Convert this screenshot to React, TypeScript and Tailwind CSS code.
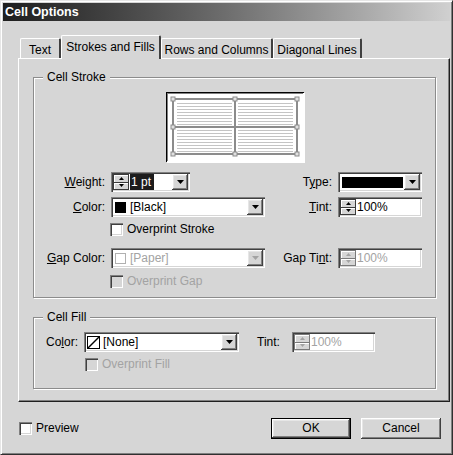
import type { ReactNode } from 'react'

const sunken =
  'shadow-[inset_1px_1px_0_#808080,inset_2px_2px_0_#404040,inset_-1px_-1px_0_#ffffff,inset_-2px_-2px_0_#d6d6d6]'
const raised =
  'shadow-[inset_-1px_-1px_0_#404040,inset_1px_1px_0_#ffffff,inset_-2px_-2px_0_#808080,inset_2px_2px_0_#e6e6e6]'

function Tri({ dir = 'down', small = false, dim = false }: { dir?: 'up' | 'down'; small?: boolean; dim?: boolean }) {
  const w = small ? 5 : 7
  const h = small ? 3 : 4
  const d = dir === 'up' ? `M0 ${h} L${w / 2} 0 L${w} ${h}Z` : `M0 0 L${w / 2} ${h} L${w} 0Z`
  return (
    <svg width={w} height={h} viewBox={`0 0 ${w} ${h}`}>
      <path d={d} fill={dim ? '#a3a3a3' : '#000'} />
    </svg>
  )
}

function DropBtn({ dim }: { dim?: boolean }) {
  return (
    <div className={`w-[16px] h-[16px] bg-[#d6d6d6] flex items-center justify-center ${raised}`}>
      <Tri dim={dim} />
    </div>
  )
}

function Spinner({ dim }: { dim?: boolean }) {
  return (
    <div className={`w-[16px] h-[16px] flex flex-col bg-[#d6d6d6] border ${dim ? 'border-[#7a7a7a]' : 'border-[#3a3a3a]'}`}>
      <div className={`flex-1 flex items-center justify-center border-b ${dim ? 'border-[#7a7a7a]' : 'border-[#3a3a3a]'} shadow-[inset_1px_1px_0_#fff]`}>
        <Tri dir="up" small dim={dim} />
      </div>
      <div className="flex-1 flex items-center justify-center shadow-[inset_1px_1px_0_#fff]">
        <Tri small dim={dim} />
      </div>
    </div>
  )
}

function Field({ w, children, drop, spin, dim }: { w: string; children: ReactNode; drop?: boolean; spin?: boolean; dim?: boolean }) {
  return (
    <div className={`${w} h-[20px] bg-white p-[2px] flex items-center ${sunken}`}>
      {spin && <Spinner dim={dim} />}
      <div className={`flex-1 min-w-0 flex items-center h-full ${dim ? 'text-[#a3a3a3]' : ''}`}>{children}</div>
      {drop && <DropBtn dim={dim} />}
    </div>
  )
}

function Check({ dim, label }: { dim?: boolean; label: string }) {
  return (
    <div className="flex items-center h-[13px]">
      <div className={`w-[13px] h-[13px] ${dim ? 'bg-[#d6d6d6]' : 'bg-white'} ${sunken}`} />
      <span className={`ml-[4px] leading-[13px] ${dim ? 'text-[#a3a3a3]' : ''}`}>{label}</span>
    </div>
  )
}

function Group({ title, className, children }: { title: string; className: string; children: ReactNode }) {
  return (
    <div className={`relative border border-[#8c8c8c] shadow-[inset_1px_1px_0_#ffffff,1px_1px_0_#ffffff] ${className}`}>
      <span className="absolute -top-[8px] left-[9px] px-[4px] bg-[#d6d6d6] leading-[14px]">{title}</span>
      {children}
    </div>
  )
}

function Preview() {
  const hatch: number[] = []
  for (let y = 11; y <= 60; y += 3) if (y < 33 || y > 37) hatch.push(y)
  const handles = [
    [7, 7], [69, 7], [131, 7],
    [7, 35], [131, 35],
    [7, 62], [69, 62], [131, 62],
  ]
  return (
    <svg width="138" height="70" viewBox="0 0 138 70">
      <rect x="0" y="0" width="138" height="70" fill="#fff" />
      <path d="M0 0.5H138M0.5 0V70" stroke="#000" />
      <path d="M1 1.5H137M1.5 1V69" stroke="#808080" />
      {hatch.map((y) => (
        <path key={y} d={`M11 ${y + 0.5}H66M72 ${y + 0.5}H127`} stroke="#c4c4c4" />
      ))}
      <rect x="7" y="7" width="124" height="55" fill="none" stroke="#8c8c8c" strokeWidth="2" />
      <path d="M69 7V62M7 35H131" stroke="#8c8c8c" strokeWidth="2" />
      {handles.map(([x, y], i) => (
        <rect key={i} x={x - 2} y={y - 2} width="4" height="4" fill="#e0e0e0" stroke="#8c8c8c" />
      ))}
    </svg>
  )
}

const tabs = [
  { label: 'Text', w: 'w-[41px]' },
  { label: 'Strokes and Fills', w: 'w-[100px]', active: true },
  { label: 'Rows and Columns', w: 'w-[112px]' },
  { label: 'Diagonal Lines', w: 'w-[89px]' },
]

export default function App() {
  return (
    <div className="w-[453px] h-[455px] bg-[#d6d6d6] text-[12px] text-black font-['Liberation_Sans',Arial,sans-serif] border border-t-[#e6e6e6] border-l-[#e6e6e6] border-r-[#303030] border-b-[#303030] shadow-[inset_1px_1px_0_#ffffff,inset_-1px_-1px_0_#808080] p-[2px] flex flex-col overflow-hidden">
      {/* title bar */}
      <div className="h-[18px] shrink-0 bg-linear-to-r from-[#1e1e1e] via-[#6e6e6e] to-[#d0d0d0] text-white font-bold text-[12.5px] leading-[18px] pl-[2px]">
        Cell Options
      </div>

      <div className="ml-[15px] mt-[14px] flex flex-col">
        {/* tabs */}
        <div className="flex items-end h-[23px] pl-[2px] relative z-10">
          {tabs.map((t) =>
            t.active ? (
              <div
                key={t.label}
                className={`${t.w} h-[24px] -mb-[1px] bg-[#d6d6d6] border-t border-l border-white border-r-2 border-r-[#404040] rounded-t-[2px] text-center leading-[22px]`}
              >
                {t.label}
              </div>
            ) : (
              <div
                key={t.label}
                className={`${t.w} h-[20px] border-t border-l border-white border-r-2 border-r-[#404040] rounded-t-[2px] text-center leading-[23px]`}
              >
                {t.label}
              </div>
            ),
          )}
        </div>

        {/* panel */}
        <div className="h-[344px] border-t border-l border-white border-r border-b border-r-[#202020] border-b-[#202020] shadow-[inset_-1px_-1px_0_#808080] pl-[14px] pt-[18px] flex flex-col">
          <Group title="Cell Stroke" className="w-[403px] h-[221px] flex flex-col">
            <div className="mt-[14px] flex justify-center">
              <div className="shadow-[1px_1px_0_#fff]">
                <Preview />
              </div>
            </div>

            {/* weight / type */}
            <div className="mt-[10px] flex items-center h-[20px]">
              <span className="w-[71px] text-right"><span className="underline">W</span>eight:</span>
              <div className="ml-[6px]">
                <Field w="w-[79px]" spin drop>
                  <span className="ml-[1px] h-[16px] w-[24px] bg-[#1c1c1c] text-white leading-[16px] pl-[1px]">1 pt</span>
                </Field>
              </div>
              <div className="flex-1" />
              <span className="text-right">T<span className="underline">y</span>pe:</span>
              <div className="ml-[6px] mr-[13px]">
                <Field w="w-[84px]" drop>
                  <div className="ml-[2px] mr-[1px] h-[11px] flex-1 bg-black" />
                </Field>
              </div>
            </div>

            {/* color / tint */}
            <div className="mt-[5px] flex items-center h-[20px]">
              <span className="w-[71px] text-right"><span className="underline">C</span>olor:</span>
              <div className="ml-[6px]">
                <Field w="w-[154px]" drop>
                  <div className="ml-[2px] w-[11px] h-[11px] bg-black" />
                  <span className="ml-[4px]">[Black]</span>
                </Field>
              </div>
              <div className="flex-1" />
              <span className="text-right"><span className="underline">T</span>int:</span>
              <div className="ml-[6px] mr-[13px]">
                <Field w="w-[84px]" spin>
                  <span className="ml-[1px]">100%</span>
                </Field>
              </div>
            </div>

            <div className="mt-[6px] pl-[76px]">
              <Check label="Overprint Stroke" />
            </div>

            {/* gap color / gap tint */}
            <div className="mt-[12px] flex items-center h-[20px]">
              <span className="w-[71px] text-right"><span className="underline">G</span>ap Color:</span>
              <div className="ml-[6px]">
                <Field w="w-[154px]" drop dim>
                  <div className="ml-[2px] w-[11px] h-[11px] border border-[#b0b0b0] bg-white" />
                  <span className="ml-[4px]">[Paper]</span>
                </Field>
              </div>
              <div className="flex-1" />
              <span className="text-right">Gap Ti<span className="underline">n</span>t:</span>
              <div className="ml-[6px] mr-[13px]">
                <Field w="w-[84px]" spin dim>
                  <span className="ml-[1px]">100%</span>
                </Field>
              </div>
            </div>

            <div className="mt-[7px] pl-[76px]">
              <Check dim label="Overprint Gap" />
            </div>
          </Group>

          <Group title="Cell Fill" className="mt-[19px] w-[403px] h-[72px] flex flex-col">
            <div className="mt-[14px] pl-[12px] flex items-center h-[20px]">
              <span className="w-[38px]">Co<span className="underline">l</span>or:</span>
              <Field w="w-[155px]" drop>
                <svg width="13" height="13" viewBox="0 0 13 13" className="ml-[1px]">
                  <rect x="0.5" y="0.5" width="12" height="12" fill="#fff" stroke="#000" />
                  <path d="M1 12L12 1" stroke="#000" strokeWidth="1.5" />
                </svg>
                <span className="ml-[3px]">[None]</span>
              </Field>
              <span className="ml-[18px] w-[35px]">Tint:</span>
              <Field w="w-[83px]" spin dim>
                <span className="ml-[1px]">100%</span>
              </Field>
            </div>
            <div className="mt-[6px] pl-[51px]">
              <Check dim label="Overprint Fill" />
            </div>
          </Group>
        </div>
      </div>

      {/* footer */}
      <div className="mt-[16px] flex items-center h-[20px] pl-[16px] pr-[9px]">
        <Check label="Preview" />
        <div className="flex-1" />
        <div className="w-[80px] h-[21px] border border-black">
          <div className={`h-full flex items-center justify-center ${raised}`}>OK</div>
        </div>
        <div className={`ml-[10px] w-[80px] h-[21px] flex items-center justify-center ${raised}`}>Cancel</div>
      </div>
    </div>
  )
}
